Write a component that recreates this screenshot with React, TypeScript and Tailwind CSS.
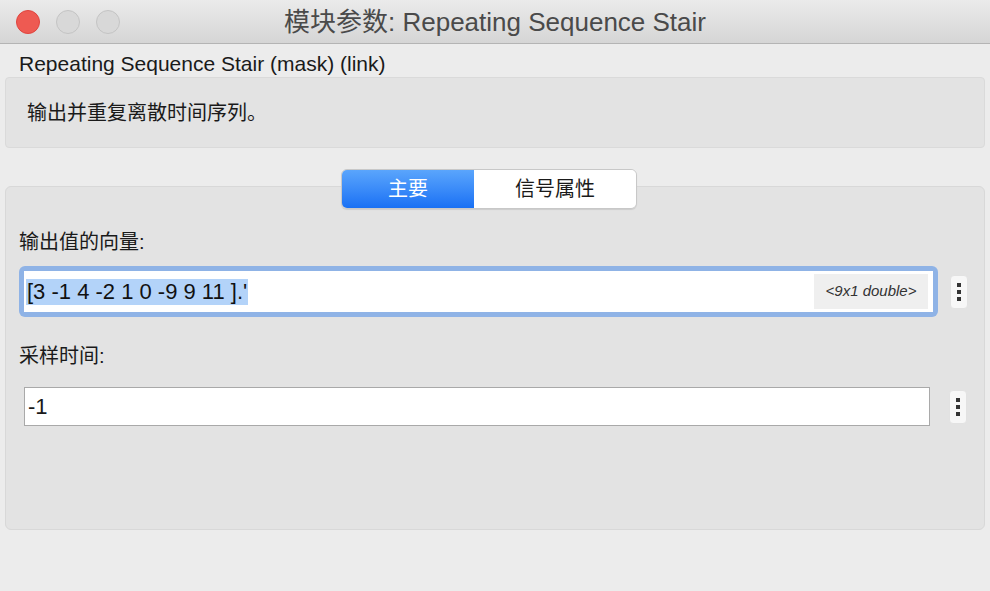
import React from 'react';

const font = { fontFamily: '"Liberation Sans", "Noto Sans CJK SC", sans-serif' };

function Kebab() {
  return (
    <div className="flex h-[34px] w-[18px] flex-col items-center justify-center gap-[3px] rounded-[4px] border border-[#e2e2e2] bg-[#f7f7f7]">
      <span className="h-[4px] w-[4px] bg-[#333]" />
      <span className="h-[4px] w-[4px] bg-[#333]" />
      <span className="h-[4px] w-[4px] bg-[#333]" />
    </div>
  );
}

export default function App() {
  return (
    <div className="flex h-[591px] w-[990px] flex-col overflow-hidden bg-[#ececec] text-[#1a1a1a]" style={font}>
      {/* Title bar */}
      <div className="relative flex h-[44px] shrink-0 items-center justify-center border-b border-[#b4b4b4] bg-gradient-to-b from-[#ebebeb] to-[#d5d5d5]">
        <div className="absolute left-[16px] top-[10px] flex gap-[16px]">
          <span className="h-[24px] w-[24px] rounded-full border border-[#e0443e] bg-[#ee5a52]" />
          <span className="h-[24px] w-[24px] rounded-full border border-[#c4c4c4] bg-[#d8d8d8]" />
          <span className="h-[24px] w-[24px] rounded-full border border-[#c4c4c4] bg-[#d8d8d8]" />
        </div>
        <span className="pt-[2px] text-[26px] text-[#4a4a4a]">模块参数: Repeating Sequence Stair</span>
      </div>

      {/* Header */}
      <div className="px-[19px] pt-[8px] text-[21px] leading-[24px]">Repeating Sequence Stair (mask) (link)</div>

      <div className="mx-[5px] mt-[1px] flex h-[71px] items-center rounded-[4px] border border-[#dadada] bg-[#e3e3e3] px-[21px] text-[20px]">
        输出并重复离散时间序列。
      </div>

      {/* Tabs panel */}
      <div className="relative mx-[5px] mt-[38px] h-[344px] rounded-[6px] border border-[#d8d8d8] bg-[#e3e3e3] px-[13px]">
        <div className="absolute left-[335px] top-[-18px] flex h-[40px] overflow-hidden rounded-[6px] border border-[#c8c8c8] text-[20px] shadow-[0_1px_1px_rgba(0,0,0,0.1)]">
          <div className="flex w-[132px] items-center justify-center bg-gradient-to-b from-[#5aa5fc] to-[#1870f4] text-white">主要</div>
          <div className="flex w-[162px] items-center justify-center bg-white">信号属性</div>
        </div>

        <div className="pt-[43px] text-[20px] leading-[24px]">输出值的向量:</div>
        <div className="mt-[12px] flex items-center gap-[12px]">
          <div className="flex h-[51px] w-[919px] items-center rounded-[6px] bg-[#8fb3e6] p-[5px]">
            <div className="flex h-full w-full items-center bg-white pl-[2px] pr-[5px]">
              <span className="bg-[#b3d3f9] px-[1px] text-[22px] leading-[26px] text-[#111]">[3 -1 4 -2 1 0 -9 9 11 ].'</span>
              <span className="ml-auto flex h-[35px] w-[114px] items-center justify-center bg-[#efefef] text-[15px] italic text-[#333]">&lt;9x1 double&gt;</span>
            </div>
          </div>
          <Kebab />
        </div>

        <div className="pt-[27px] text-[20px] leading-[24px]">采样时间:</div>
        <div className="mt-[19px] flex items-center gap-[19px]">
          <div className="ml-[5px] flex h-[39px] w-[906px] items-center border border-[#a9a9a9] bg-white px-[3px] text-[22px]">-1</div>
          <Kebab />
        </div>
      </div>
    </div>
  );
}
